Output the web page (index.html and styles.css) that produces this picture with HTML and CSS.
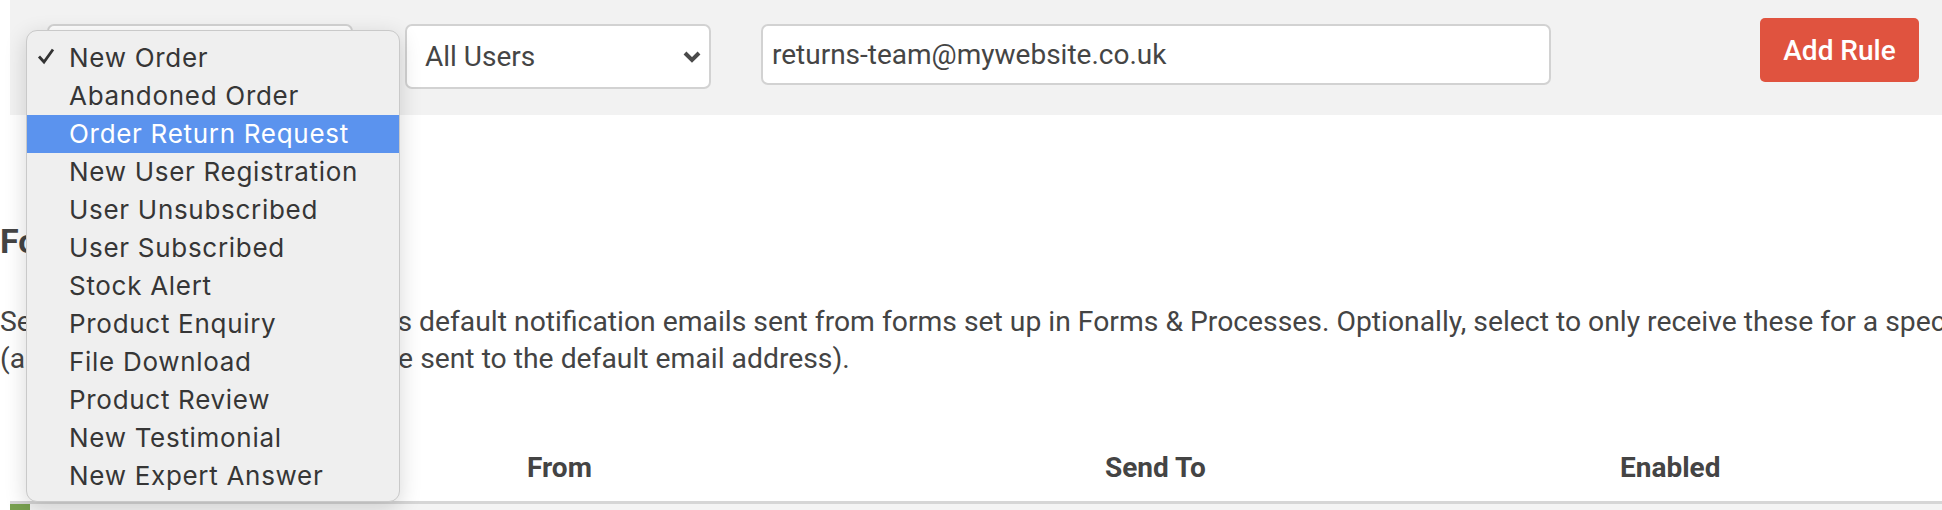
FILE: index.html
```html
<!DOCTYPE html>
<html>
<head>
<meta charset="utf-8">
<link rel="stylesheet" href="styles.css">
</head>
<body>
<div class="page">
  <div class="band">
    <div class="select select-event">
      <span class="select-text">New Order</span>
      <svg class="chev" width="18" height="12" viewBox="0 0 18 12"><path d="M2 2 L9 9 L16 2" fill="none" stroke="#4a4a4a" stroke-width="4"/></svg>
    </div>
    <div class="select select-users">
      <span class="select-text">All Users</span>
      <svg class="chev" width="18" height="12" viewBox="0 0 18 12"><path d="M2 2 L9 9 L16 2" fill="none" stroke="#4a4a4a" stroke-width="4"/></svg>
    </div>
    <div class="input">returns-team@mywebsite.co.uk</div>
    <button class="btn">Add Rule</button>
  </div>

  <h2 class="heading">Form Notifications</h2>
  <p class="desc">Set the address to receive Forms default notification emails sent from forms set up in Forms &amp; Processes. Optionally, select to only receive these for a specific form<br>(all other notifications will still be sent to the default email address).</p>

  <div class="table">
    <div class="thead">
      <div class="th"></div>
      <div class="th">From</div>
      <div class="th">Send To</div>
      <div class="th">Enabled</div>
    </div>
    <div class="trow">
      <div class="marker"></div>
    </div>
  </div>

  <ul class="menu">
    <li class="item checked"><svg class="check" width="18" height="18" viewBox="0 0 18 18"><path d="M2 9.5 L7 15 L16 2.5" fill="none" stroke="#333" stroke-width="2.8" stroke-linejoin="miter"/></svg>New Order</li>
    <li class="item">Abandoned Order</li>
    <li class="item active">Order Return Request</li>
    <li class="item">New User Registration</li>
    <li class="item">User Unsubscribed</li>
    <li class="item">User Subscribed</li>
    <li class="item">Stock Alert</li>
    <li class="item">Product Enquiry</li>
    <li class="item">File Download</li>
    <li class="item">Product Review</li>
    <li class="item">New Testimonial</li>
    <li class="item">New Expert Answer</li>
  </ul>
</div>
</body>
</html>
```

FILE: styles.css
```css
* { box-sizing: border-box; }
html, body {
  margin: 0;
  padding: 0;
  background: #ffffff;
  overflow: hidden;
}
body {
  font-family: Roboto, "Liberation Sans", sans-serif;
  color: #444444;
}
.page {
  position: relative;
  width: 1942px;
  height: 510px;
  overflow: hidden;
}
.band {
  margin-left: 10px;
  height: 115px;
  background: #f2f2f2;
  display: flex;
  align-items: flex-start;
  padding: 18px 0 0 37px;
}
.select {
  display: flex;
  align-items: center;
  justify-content: space-between;
  height: 65px;
  margin-top: 6px;
  background: #ffffff;
  border: 2px solid #d2d2d2;
  border-radius: 7px;
  padding: 0 8px 0 18px;
  font-size: 28px;
  color: #454545;
}
.select-event { width: 306px; }
.select-users { width: 306px; margin-left: 52px; }
.chev { display: block; }
.input {
  width: 790px;
  height: 61px;
  margin-top: 6px;
  margin-left: 50px;
  background: #ffffff;
  border: 2px solid #d2d2d2;
  border-radius: 7px;
  padding: 0 0 0 9px;
  display: flex;
  align-items: center;
  font-size: 28px;
  color: #454545;
}
.btn {
  margin-left: 209px;
  width: 159px;
  height: 64px;
  background: #e0533f;
  color: #ffffff;
  border: none;
  border-radius: 5px;
  font-family: Roboto, "Liberation Sans", sans-serif;
  font-size: 28px;
  font-weight: 500;
  padding: 0;
}
.heading {
  margin: 106px 0 0 0;
  font-size: 34px;
  line-height: 40px;
  font-weight: 700;
  color: #444444;
}
.desc {
  margin: 42px 0 0 0;
  font-size: 28.3px;
  line-height: 37px;
  white-space: nowrap;
  color: #444444;
}
.table {
  margin: 61px 0 0 10px;
}
.thead {
  display: grid;
  grid-template-columns: 517px 578px 515px 1fr;
  padding: 15px 0 18px 0;
  border-bottom: 3px solid #d6d6d6;
}
.th {
  font-size: 28px;
  line-height: 30px;
  font-weight: 700;
  color: #444444;
}
.trow {
  height: 40px;
  background: #f4f4f4;
  display: flex;
}
.marker {
  width: 20px;
  background: #78a04f;
}
.menu {
  position: absolute;
  left: 26px;
  top: 30px;
  width: 374px;
  height: 472px;
  margin: 0;
  padding: 8px 0;
  list-style: none;
  background: #efefef;
  border: 1px solid #c9c9c9;
  border-radius: 11px;
  box-shadow: 0 6px 22px rgba(0, 0, 0, 0.16);
  font-family: Inter, "Liberation Sans", sans-serif;
  font-size: 26px;
  letter-spacing: 0.7px;
  color: #363636;
}
.item {
  position: relative;
  height: 38px;
  line-height: 38px;
  padding-left: 42px;
  white-space: nowrap;
}
.item.active {
  background: #5b93ee;
  color: #ffffff;
}
.check {
  position: absolute;
  left: 10px;
  top: 8px;
}
```
